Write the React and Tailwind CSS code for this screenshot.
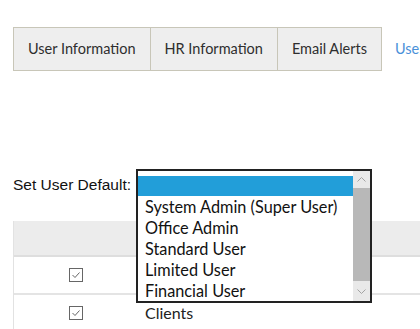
export default function App() {
    const options = ["System Admin (Super User)", "Office Admin", "Standard User", "Limited User", "Financial User"];
    const tabs = ["User Information", "HR Information", "Email Alerts"];

    return (
        <div className="relative w-[420px] h-[329px] overflow-hidden bg-white font-['Lato',sans-serif] text-[#333]">
            <div className="pt-[27px] pl-[13px] flex whitespace-nowrap">
                {tabs.map((t) => (
                    <div key={t}
                         className="h-[44px] flex items-center px-[14px] bg-[#eeeeee] border border-[#c8c6b8] border-l-0 first:border-l text-[14.5px] text-[#2e2e2e]">
                        {t}
                    </div>
                ))}
                <div className="h-[44px] flex items-center px-[13px] text-[14.5px] text-[#4a90d9]">
                    User Roles
                </div>
            </div>

            <div className="relative mt-[100px] pl-[13px] h-[28px] flex items-center">
                <span className="font-['Liberation_Sans',sans-serif] text-[15.5px] text-[#111]">Set User Default:</span>
                <div className="absolute left-[136px] top-[-2px] w-[236px] h-[134px] border-2 border-[#222] bg-white flex z-10">
                    <div className="flex-1 pt-[5px] font-['Lato',sans-serif] text-[16.3px] text-[#111]">
                        <div className="h-[20px] bg-[#229ed9]"></div>
                        {options.map((o) => (
                            <div key={o} className="h-[21px] leading-[21px] pl-[7px] whitespace-nowrap">{o}</div>
                        ))}
                    </div>
                    <div className="w-[17px] flex flex-col bg-[#e9e9e9]">
                        <div className="h-[17px] flex items-center justify-center">
                            <svg width="9" height="5" viewBox="0 0 9 5"><path d="M0.5 4.5 L4.5 0.5 L8.5 4.5" fill="none" stroke="#a3a3a3" strokeWidth="1"/></svg>
                        </div>
                        <div className="flex-1 bg-[#b8b8b8]"></div>
                        <div className="h-[20px] flex items-center justify-center">
                            <svg width="9" height="5" viewBox="0 0 9 5"><path d="M0.5 0.5 L4.5 4.5 L8.5 0.5" fill="none" stroke="#a3a3a3" strokeWidth="1"/></svg>
                        </div>
                    </div>
                </div>
            </div>

            <div className="ml-[13px] mt-[22px] border-l border-[#e2e2e2] w-[420px]">
                <div className="h-[36px] bg-[#ececec] border-b-2 border-[#dedede]"></div>
                <div className="h-[38px] grid grid-cols-[131px_1fr] items-center border-b-2 border-[#e4e4e4]">
                    <div className="flex justify-center pl-[4px] pr-[12px]">
                        <Check/>
                    </div>
                    <div></div>
                </div>
                <div className="h-[38px] grid grid-cols-[131px_1fr] items-center border-b-2 border-[#e4e4e4]">
                    <div className="flex justify-center pl-[4px] pr-[12px]">
                        <Check/>
                    </div>
                    <div className="text-[16px] text-[#222]">Clients</div>
                </div>
            </div>
        </div>
    );
}

function Check() {
    return (
        <div className="w-[14px] h-[14px] border border-[#666] bg-white flex items-center justify-center">
            <svg width="10" height="8" viewBox="0 0 10 8"><path d="M1.5 4 L4 6.5 L8.5 1.5" fill="none" stroke="#555" strokeWidth="0.9"/></svg>
        </div>
    );
}
